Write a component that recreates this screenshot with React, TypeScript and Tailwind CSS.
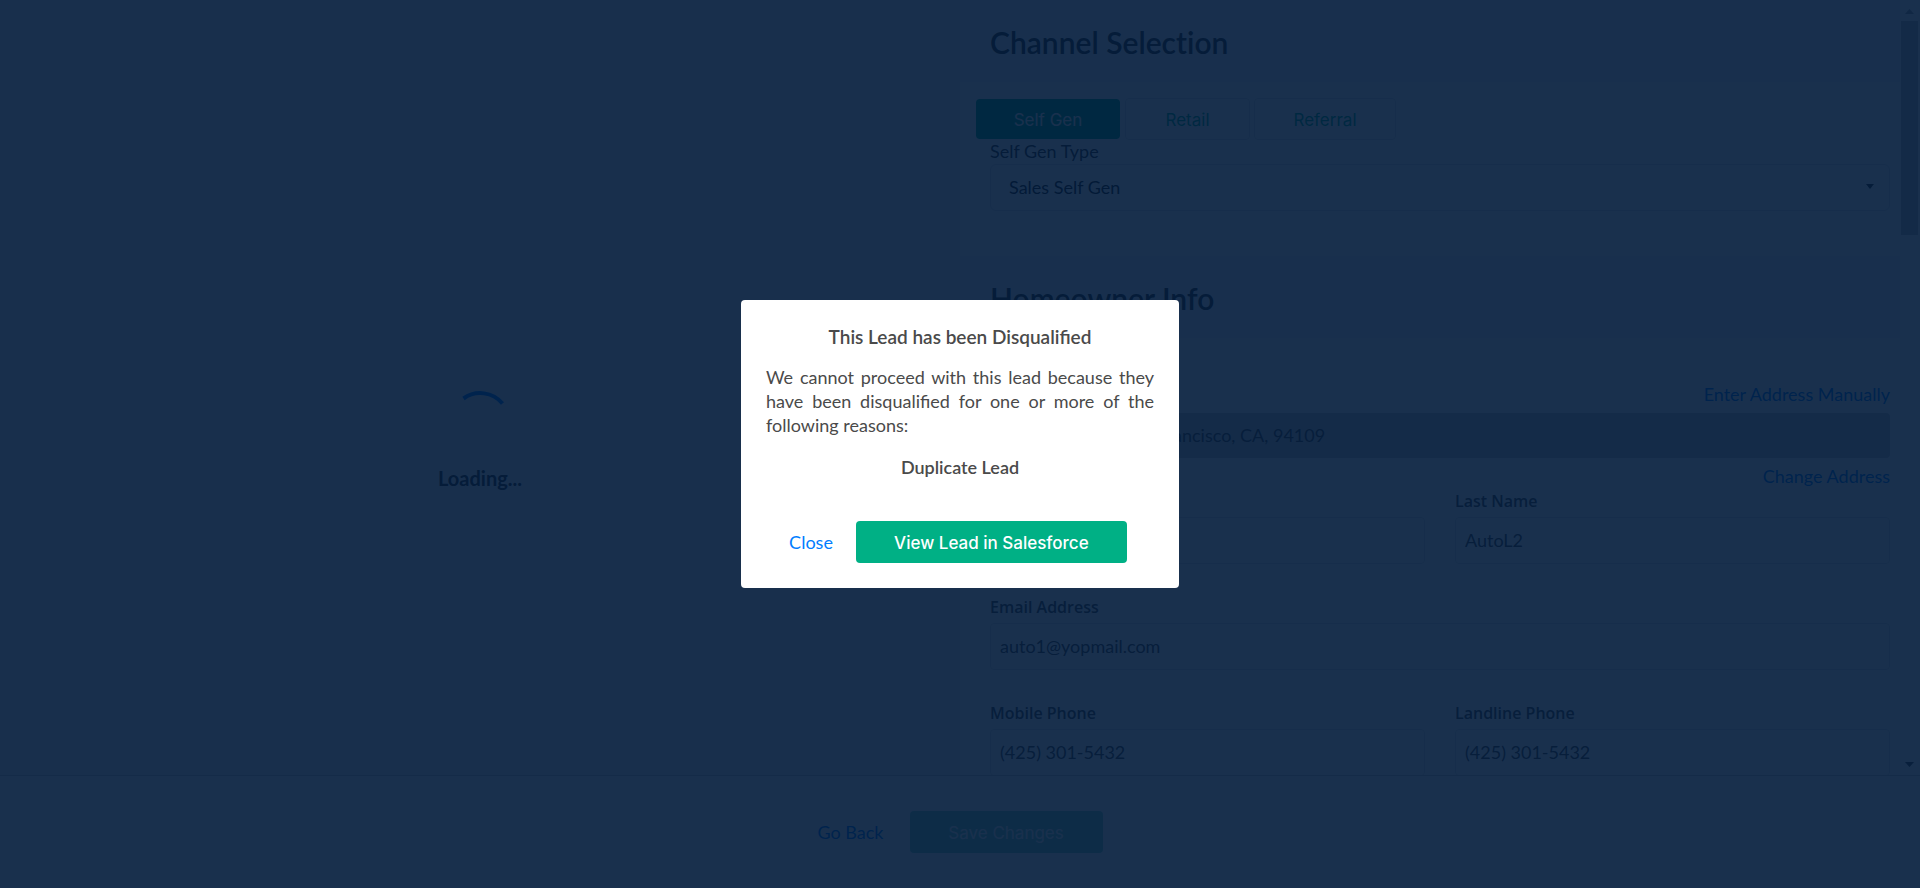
import type { ReactNode } from "react";

const body = "font-[Lato,'Open_Sans',sans-serif]";
const label = "block text-base leading-5 font-semibold text-[#4a4a4a] font-['Open_Sans',Lato,sans-serif]";
const input =
  "mt-1.5 h-[47px] w-full rounded-sm border border-[#dcdfe3] bg-transparent px-[9px] pb-0.5 text-lg text-[#4a4a4a]";
const link = "text-lg leading-6 text-[#007dff]";
const buttonText = "rounded-sm pt-0.5 text-[17px] leading-6 font-[Inter,Roboto,sans-serif]";
const tab = "h-[42px] border border-[#dcdfe3] text-[#00b085]";

function SectionHeader({ children }: { children: ReactNode }) {
  return (
    <header className="flex h-[82px] items-center bg-[#f5f6f7] px-[30px] pt-0.5">
      <h2 className="text-[30px] leading-9 font-semibold text-[#333333] [font-variant-ligatures:none]">{children}</h2>
    </header>
  );
}

function Field({ id, text, value, type = "text" }: { id: string; text: string; value: string; type?: string }) {
  return (
    <div>
      <label htmlFor={id} className={label}>
        {text}
      </label>
      <input id={id} type={type} defaultValue={value} className={input} />
    </div>
  );
}

function ScrollTrack() {
  return (
    <div aria-hidden="true" className="flex w-5 shrink-0 flex-col items-center bg-[#f8f8f8] pr-0.5">
      <svg width="9" height="5" viewBox="0 0 9 5" className="mt-[9px] mb-[7px] shrink-0">
        <path d="M0 5 4.5 0 9 5Z" fill="#a3a3a3" />
      </svg>
      <div className="h-[214px] w-[17px] bg-[#c1c1c1]" />
      <svg width="9" height="5" viewBox="0 0 9 5" className="mt-auto mb-2 shrink-0">
        <path d="M0 0 4.5 5 9 0Z" fill="#505050" />
      </svg>
    </div>
  );
}

export default function App() {
  return (
    <div className={`flex h-screen flex-col overflow-hidden bg-white ${body}`}>
      <main className="flex min-h-0 flex-1">
        <section className="flex flex-1 flex-col items-center justify-center bg-[#f0f2f4] pt-[104px]" aria-live="polite">
          <svg width="60" height="60" viewBox="0 0 60 60" fill="none" aria-hidden="true">
            <path d="M13.5 8.5A29 29 0 0 1 52.5 13.5" stroke="#007dff" strokeWidth="4" />
          </svg>
          <p className="mt-4 text-xl leading-6 font-bold text-[#333333]">Loading...</p>
        </section>

        <div className="flex flex-1 overflow-hidden">
          <div className="min-w-0 flex-1">
            <section className="h-64">
              <SectionHeader>Channel Selection</SectionHeader>
              <div className="flex gap-1 pt-4 pl-[15px]">
                <button
                  type="button"
                  className={`h-[42px] w-[146px] border border-white bg-[#00b085] bg-clip-padding text-white ${buttonText}`}
                >
                  Self Gen
                </button>
                <button type="button" className={`w-[125px] ${tab} ${buttonText}`}>
                  Retail
                </button>
                <button type="button" className={`w-[142px] ${tab} ${buttonText}`}>
                  Referral
                </button>
              </div>
              <div className="pr-2.5 pl-[30px]">
                <label htmlFor="self-gen-type" className="block text-lg leading-[22px] text-[#333333]">
                  Self Gen Type
                </label>
                <div className="relative mt-0.5">
                  <select
                    id="self-gen-type"
                    className="h-[47px] w-full appearance-none rounded-md border border-[#dcdfe3] bg-transparent px-[18px] pb-0.5 text-lg text-[#222222]"
                  >
                    <option>Sales Self Gen</option>
                  </select>
                  <svg
                    width="8"
                    height="5"
                    viewBox="0 0 8 5"
                    aria-hidden="true"
                    className="pointer-events-none absolute top-5 right-4"
                  >
                    <path d="M0 0 4 5 8 0Z" fill="#333333" />
                  </svg>
                </div>
              </div>
            </section>

            <section>
              <SectionHeader>Homeowner Info</SectionHeader>
              <div className="pt-11 pr-2.5 pl-[30px]">
                <div className="flex items-center justify-between">
                  <label htmlFor="address" className={label}>
                    Address
                  </label>
                  <a href="#manual" className={link}>
                    Enter Address Manually
                  </a>
                </div>
                <input
                  id="address"
                  disabled
                  defaultValue="1500 Lombard, San Francisco, CA, 94109"
                  className="mt-[7px] h-[45px] w-full rounded-sm bg-[#c9cbcd] px-2.5 pb-0.5 text-lg text-[#4a4a4a]"
                />
                <div className="mt-1.5 flex justify-end">
                  <a href="#change" className={link}>
                    Change Address
                  </a>
                </div>
                <div className="mt-[3px] flex flex-col gap-[33px]">
                  <div className="grid grid-cols-2 gap-[30px]">
                    <Field id="first-name" text="First Name" value="Auto" />
                    <Field id="last-name" text="Last Name" value="AutoL2" />
                  </div>
                  <Field id="email" text="Email Address" value="auto1@yopmail.com" type="email" />
                  <div className="grid grid-cols-2 gap-[30px]">
                    <Field id="mobile" text="Mobile Phone" value="(425) 301-5432" type="tel" />
                    <Field id="landline" text="Landline Phone" value="(425) 301-5432" type="tel" />
                  </div>
                </div>
              </div>
            </section>
          </div>
          <ScrollTrack />
        </div>
      </main>

      <footer className="z-0 flex shrink-0 items-center justify-center gap-[26px] border-t border-[#c9cbcd] bg-white pt-[35px] pb-[35px]">
        <a href="#back" className={link}>
          Go Back
        </a>
        <button type="button" disabled className={`h-[42px] w-[193px] bg-[#80d7c2] text-white ${buttonText}`}>
          Save Changes
        </button>
      </footer>

      <div className="fixed inset-0 z-10 flex items-center justify-center bg-[#00193a]/90">
        <div
          role="dialog"
          aria-modal="true"
          aria-labelledby="dialog-title"
          className="flex w-[438px] flex-col rounded bg-white p-[25px] text-lg leading-6 text-[#4a4a4a]"
        >
          <h1 id="dialog-title" className="text-center text-[19px] font-semibold">
            This Lead has been Disqualified
          </h1>
          <p className="mt-4 text-justify">
            We cannot proceed with this lead because they have been disqualified for one or more of the following
            reasons:
          </p>
          <p className="mt-[18px] text-center font-semibold">Duplicate Lead</p>
          <div className="mt-[42px] flex items-center justify-center gap-[23px] pr-1">
            <button type="button" className={link}>
              Close
            </button>
            <button type="button" className={`h-[42px] w-[271px] bg-[#00b085] font-medium text-white ${buttonText}`}>
              View Lead in Salesforce
            </button>
          </div>
        </div>
      </div>
    </div>
  );
}
